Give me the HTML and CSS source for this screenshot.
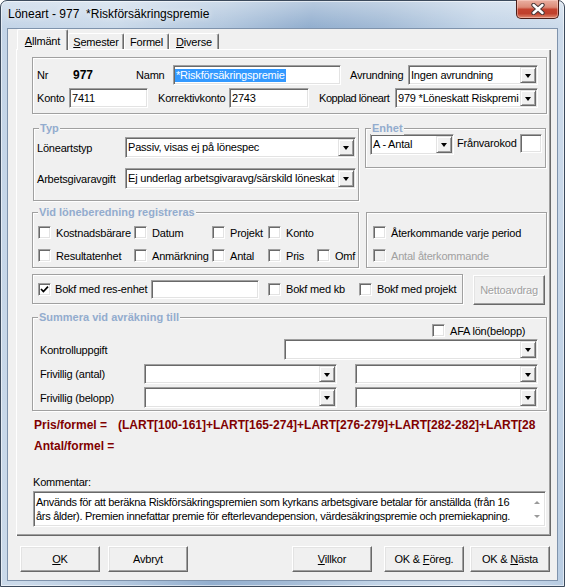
FILE: index.html
```html
<!DOCTYPE html>
<html lang="sv">
<head>
<meta charset="utf-8">
<title>Löneart - 977 *Riskförsäkringspremie</title>
<link rel="stylesheet" href="styles.css">
</head>
<body>
<div class="window">
  <div class="titlebar">
    <div class="title">Löneart - 977&nbsp; *Riskförsäkringspremie</div>
    <div class="close">
      <svg width="14" height="12" viewBox="0 0 14 12">
        <path d="M2.5 2 L11.5 10 M11.5 2 L2.5 10" stroke="#4a3a3a" stroke-width="4.4" stroke-linecap="round" fill="none"/>
        <path d="M2.5 2 L11.5 10 M11.5 2 L2.5 10" stroke="#ffffff" stroke-width="2.4" stroke-linecap="round" fill="none"/>
      </svg>
    </div>
  </div>
  <div class="client">
    <div class="tabs">
      <div class="tab active t-allm"><span><u>A</u>llmänt</span></div>
      <div class="tab t-sem"><span><u>S</u>emester</span></div>
      <div class="tab t-form"><span>Formel</span></div>
      <div class="tab t-div"><span><u>D</u>iverse</span></div>
    </div>
    <div class="page">
      <div class="group g-head">
        <div class="row">
          <span class="lbl l-nr">Nr</span>
          <span class="lbl l-num">977</span>
          <span class="lbl l-namn">Namn</span>
          <div class="edit e-namn"><span class="sel">*Riskförsäkringspremie</span></div>
          <span class="lbl l-avr">Avrundning</span>
          <div class="combo c-avr"><span class="val">Ingen avrundning</span><span class="drop"></span></div>
        </div>
        <div class="row row-2">
          <span class="lbl l-konto">Konto</span>
          <div class="edit e-konto">7411</div>
          <span class="lbl l-korr">Korrektivkonto</span>
          <div class="edit e-korr">2743</div>
          <span class="lbl l-kopp">Kopplad löneart</span>
          <div class="combo c-kopp"><span class="val">979 *Löneskatt Riskpremie</span><span class="drop"></span></div>
        </div>
      </div>

      <div class="line line-b">
        <div class="group g-typ">
          <span class="legend">Typ</span>
          <div class="row row-typ">
            <span class="lbl l-typ">Löneartstyp</span>
            <div class="combo c-typ"><span class="val">Passiv, visas ej på lönespec</span><span class="drop"></span></div>
          </div>
          <div class="row row-typ row-typ2">
            <span class="lbl l-typ">Arbetsgivaravgift</span>
            <div class="combo c-typ"><span class="val">Ej underlag arbetsgivaravg/särskild löneskat</span><span class="drop"></span></div>
          </div>
        </div>
        <div class="group g-enh">
          <span class="legend">Enhet</span>
          <div class="row row-enh">
            <div class="combo c-enh"><span class="val">A - Antal</span><span class="drop"></span></div>
            <span class="lbl l-fr">Frånvarokod</span>
            <div class="edit e-fr"></div>
          </div>
        </div>
      </div>

      <div class="line line-c">
        <div class="group g-vid">
          <span class="legend">Vid löneberedning registreras</span>
          <div class="row chkrow">
            <label class="chk k1"><span class="cb"></span><span>Kostnadsbärare</span></label>
            <label class="chk k2"><span class="cb"></span><span>Datum</span></label>
            <label class="chk k3"><span class="cb"></span><span>Projekt</span></label>
            <label class="chk k4"><span class="cb"></span><span>Konto</span></label>
          </div>
          <div class="row chkrow chkrow2">
            <label class="chk k1"><span class="cb"></span><span>Resultatenhet</span></label>
            <label class="chk k2"><span class="cb"></span><span>Anmärkning</span></label>
            <label class="chk k3"><span class="cb"></span><span>Antal</span></label>
            <label class="chk k4"><span class="cb"></span><span>Pris</span></label>
            <label class="chk"><span class="cb"></span><span>Omf</span></label>
          </div>
        </div>
        <div class="group g-ater">
          <div class="row chkrow">
            <label class="chk"><span class="cb"></span><span>Återkommande varje period</span></label>
          </div>
          <div class="row chkrow chkrow2">
            <label class="chk disabled"><span class="cb"></span><span>Antal återkommande</span></label>
          </div>
        </div>
      </div>

      <div class="line line-d">
        <div class="group g-bokf">
          <label class="chk"><span class="cb checked"><svg width="9" height="9" viewBox="0 0 9 9"><path d="M1 4 L3.4 6.6 L8 1.6" stroke="#000" stroke-width="1.7" fill="none"/></svg></span><span class="l-res">Bokf med res-enhet</span></label>
          <div class="edit e-res"></div>
          <label class="chk k-kb"><span class="cb"></span><span class="l-kb">Bokf med kb</span></label>
          <label class="chk"><span class="cb"></span><span>Bokf med projekt</span></label>
        </div>
        <div class="btn b-netto disabled"><span>Nettoavdrag</span></div>
      </div>

      <div class="group g-sum">
        <span class="legend">Summera vid avräkning till</span>
        <div class="row afa-row">
          <label class="chk"><span class="cb"></span><span>AFA lön(belopp)</span></label>
        </div>
        <div class="row sum-kontr">
          <span class="lbl l-kontr">Kontrolluppgift</span>
          <div class="combo c-kontr"><span class="val"></span><span class="drop"></span></div>
        </div>
        <div class="row sum-ant">
          <span class="lbl l-friv">Frivillig (antal)</span>
          <div class="combo c-f1"><span class="val"></span><span class="drop"></span></div>
          <div class="combo c-f2"><span class="val"></span><span class="drop"></span></div>
        </div>
        <div class="row sum-bel">
          <span class="lbl l-friv">Frivillig (belopp)</span>
          <div class="combo c-f1"><span class="val"></span><span class="drop"></span></div>
          <div class="combo c-f2"><span class="val"></span><span class="drop"></span></div>
        </div>
      </div>

      <div class="formula f-pris">
        <span class="f-lbl">Pris/formel =</span>
        <span class="f-val">(LART[100-161]+LART[165-274]+LART[276-279]+LART[282-282]+LART[28</span>
      </div>
      <div class="formula">
        <span class="f-lbl">Antal/formel =</span>
      </div>

      <div class="komm-lbl">Kommentar:</div>
      <div class="memo">
        <div class="memo-text">Används för att beräkna Riskförsäkringspremien som kyrkans arbetsgivare betalar för anställda (från 16<br>års ålder). Premien innefattar premie för efterlevandepension, värdesäkringspremie och premiekapning.</div>
        <div class="memo-scroll"><span class="arr-up"></span><span class="arr-down"></span></div>
      </div>
    </div>

    <div class="buttons">
      <div class="btn b-ok"><span><u>O</u>K</span></div>
      <div class="btn b-avb"><span>Avbryt</span></div>
      <div class="btn b-vil"><span><u>V</u>illkor</span></div>
      <div class="btn b-for"><span>OK &amp; <u>F</u>öreg.</span></div>
      <div class="btn b-nas"><span>OK &amp; <u>N</u>ästa</span></div>
    </div>
  </div>
</div>
</body>
</html>
```

FILE: styles.css
```css
* { box-sizing: border-box; }
html, body { margin: 0; padding: 0; }
body {
  width: 565px;
  height: 587px;
  overflow: hidden;
  background: #ffffff;
  font-family: "Liberation Sans", Arial, sans-serif;
  font-size: 11px;
  line-height: 14px;
  letter-spacing: -0.2px;
  color: #000;
}

/* ---------- window frame ---------- */
.window {
  width: 565px;
  height: 587px;
  border: 1px solid #3c4a5c;
  border-radius: 7px 7px 0 0;
  background:
    linear-gradient(to bottom, rgba(255,255,255,0.35), rgba(255,255,255,0) 26px),
    linear-gradient(100deg, #c3d4e7 0%, #cbdaea 18%, #b2c7de 34%, #93afcf 47%, #a3bbd6 58%, #c2d4e7 72%, #cddbeb 86%, #b8cce2 100%);
  box-shadow: inset 0 0 0 1px rgba(255,255,255,0.55);
  display: flex;
  flex-direction: column;
}
.titlebar {
  height: 28px;
  display: flex;
  align-items: flex-start;
}
.title {
  margin: 5px 0 0 7px;
  font-family: "Liberation Sans", Arial, sans-serif;
  font-size: 12px;
  line-height: 16px;
  letter-spacing: 0;
  color: #000;
  text-shadow: 0 0 6px rgba(255,255,255,0.9);
}
.close {
  margin: -1px 5px 0 auto;
  width: 43px;
  height: 19px;
  border: 1px solid #4b1d17;
  border-top: none;
  border-radius: 0 0 5px 5px;
  background: linear-gradient(to bottom, #eab0a2 0%, #dc8b78 40%, #c4432f 52%, #c0402c 75%, #e08a70 100%);
  box-shadow: inset 0 0 0 1px rgba(255,220,210,0.45);
  display: flex;
  align-items: center;
  justify-content: center;
}
.close svg { display: block; }

.client {
  margin-left: 7px;
  width: 549px;
  height: 551px;
  background: #f0f0f0;
  box-shadow: 0 0 0 1px #7f93ac;
  padding-left: 8px;
}

/* ---------- tabs ---------- */
.tabs {
  display: flex;
  align-items: flex-end;
  height: 20px;
  padding-left: 1px;
}
.tab {
  position: relative;
  z-index: 2;
  height: 16px;
  background: #f0f0f0;
  border: 1px solid #ffffff;
  border-bottom: none;
  border-right-color: #696969;
  box-shadow: inset -1px 0 0 #a0a0a0;
  border-radius: 2px 2px 0 0;
  text-align: center;
  padding-top: 1px;
  white-space: nowrap;
}
.tab.active {
  height: 21px;
  margin-bottom: -1px;
  padding-top: 4px;
}
.t-allm { width: 51px; }
.t-sem { width: 56px; }
.t-form { width: 45px; }
.t-div { width: 50px; }

.page {
  position: relative;
  z-index: 1;
  width: 535px;
  height: 487px;
  background: #f0f0f0;
  box-shadow: inset 1px 1px 0 #ffffff, inset -1px -1px 0 #696969, inset -2px -2px 0 #a0a0a0;
  padding: 8px 0 0 16px;
}

/* ---------- generic controls ---------- */
.row { display: flex; align-items: center; }
.line { display: flex; align-items: flex-start; }
.lbl { white-space: nowrap; flex: none; }

.group {
  position: relative;
  flex: none;
  border: 1px solid #a0a0a0;
  box-shadow: inset 1px 1px 0 #ffffff, 1px 1px 0 #ffffff;
}
.legend {
  position: absolute;
  top: -8px;
  left: 5px;
  padding: 0 1px;
  background: #f0f0f0;
  color: #93acce;
  font-weight: bold;
  letter-spacing: 0;
  white-space: nowrap;
}

.edit {
  flex: none;
  height: 20px;
  background: #ffffff;
  border: 1px solid;
  border-color: #a0a0a0 #ffffff #ffffff #a0a0a0;
  box-shadow: inset 1px 1px 0 #696969, inset -1px -1px 0 #e3e3e3;
  padding: 2px 0 0 2px;
  white-space: nowrap;
  overflow: hidden;
}
.sel {
  background: #3399ff;
  color: #ffffff;
  padding: 0 1px 1px 1px;
}

.combo {
  flex: none;
  display: flex;
  height: 21px;
  background: #ffffff;
  border: 1px solid;
  border-color: #a0a0a0 #ffffff #ffffff #a0a0a0;
  box-shadow: inset 1px 1px 0 #696969, inset -1px -1px 0 #e3e3e3;
}
.combo .val {
  flex: 1;
  min-width: 0;
  overflow: hidden;
  white-space: nowrap;
  padding: 2px 0 0 2px;
  line-height: 14px;
}
.drop {
  flex: none;
  width: 16px;
  margin: 1px;
  background: #f0f0f0;
  border: 1px solid;
  border-color: #e3e3e3 #696969 #696969 #e3e3e3;
  box-shadow: inset 1px 1px 0 #ffffff, inset -1px -1px 0 #a0a0a0;
  display: flex;
  align-items: center;
  justify-content: center;
}
.drop::after {
  content: "";
  width: 0;
  height: 0;
  margin-top: 1px;
  border-left: 3.5px solid transparent;
  border-right: 3.5px solid transparent;
  border-top: 4px solid #000000;
}

.chk {
  display: flex;
  align-items: center;
  white-space: nowrap;
  flex: none;
}
.cb {
  flex: none;
  width: 13px;
  height: 13px;
  margin-right: 5px;
  background: #ffffff;
  border: 1px solid;
  border-color: #a0a0a0 #ffffff #ffffff #a0a0a0;
  box-shadow: inset 1px 1px 0 #696969, inset -1px -1px 0 #e3e3e3;
  display: flex;
  align-items: center;
  justify-content: center;
}
.cb svg { display: block; }
.chk.disabled { color: #a0a0a0; }
.chk.disabled .cb { background: #f0f0f0; }

.btn {
  flex: none;
  width: 80px;
  height: 26px;
  background: #f0f0f0;
  border: 1px solid;
  border-color: #ffffff #696969 #696969 #ffffff;
  box-shadow: inset -1px -1px 0 #a0a0a0, inset 1px 1px 0 #e3e3e3;
  display: flex;
  align-items: center;
  justify-content: center;
  white-space: nowrap;
}
.btn.disabled {
  color: #a0a0a0;
  text-shadow: 1px 1px 0 #ffffff;
}

/* ---------- header group ---------- */
.g-head {
  width: 515px;
  height: 57px;
  padding: 7px 0 0 4px;
}
.g-head .row { height: 20px; }
.g-head .row-2 { margin-top: 3px; }
.l-nr { width: 36px; }
.l-num { width: 63px; font-weight: bold; font-size: 12px; letter-spacing: 0; }
.l-namn { width: 37px; }
.e-namn { width: 168px; padding-left: 1px; }
.l-avr { width: 58px; margin-left: 9px; }
.c-avr { width: 130px; height: 20px; }
.l-konto { width: 32px; }
.e-konto { width: 79px; }
.l-korr { width: 71px; margin-left: 10px; }
.e-korr { width: 80px; }
.l-kopp { width: 76px; margin-left: 10px; letter-spacing: -0.45px; }
.c-kopp { width: 143px; height: 20px; }

/* ---------- typ / enhet ---------- */
.line-b { margin-top: 14px; }
.g-typ {
  margin-left: 1px;
  width: 326px;
  height: 73px;
  padding: 8px 0 0 3px;
}
.row-typ { height: 21px; }
.row-typ2 { margin-top: 10px; }
.l-typ { width: 88px; }
.c-typ { width: 231px; }
.g-enh {
  margin-left: 6px;
  width: 181px;
  height: 40px;
  padding: 5px 0 0 4px;
}
.row-enh { align-items: flex-start; }
.c-enh { width: 84px; }
.l-fr { width: 63px; margin-left: 3px; padding-top: 2px; }
.e-fr { width: 22px; height: 19px; }

/* ---------- checkbox groups ---------- */
.line-c { margin-top: 11px; }
.g-vid {
  width: 327px;
  height: 56px;
  padding: 11px 0 0 5px;
}
.chkrow { height: 17px; }
.chkrow2 { margin-top: 6px; }
.k1 { width: 96px; }
.k2 { width: 78px; }
.k3 { width: 56px; }
.k4 { width: 49px; }
.g-ater {
  margin-left: 7px;
  width: 181px;
  height: 56px;
  padding: 11px 0 0 6px;
}

/* ---------- bokf ---------- */
.line-d { margin-top: 6px; }
.g-bokf {
  width: 431px;
  height: 30px;
  padding-left: 5px;
  display: flex;
  align-items: center;
}
.g-bokf .cb.checked { margin-right: 4px; }
.l-res { width: 96px; }
.e-res { width: 108px; height: 19px; }
.k-kb { margin-left: 9px; }
.l-kb { width: 73px; }
.b-netto {
  margin: 1px 0 0 10px;
  width: 72px;
  height: 30px;
}

/* ---------- summera ---------- */
.g-sum {
  margin-top: 12px;
  width: 515px;
  height: 94px;
  padding: 4px 0 0 7px;
}
.afa-row { height: 17px; padding-left: 392px; }
.sum-kontr { height: 21px; }
.l-kontr { width: 244px; }
.c-kontr { width: 254px; }
.sum-ant { height: 20px; margin-top: 4px; }
.sum-ant .combo { height: 20px; }
.sum-bel { height: 21px; margin-top: 3px; }
.l-friv { width: 104px; }
.c-f1 { width: 193px; }
.c-f2 { width: 183px; margin-left: 18px; }

/* ---------- formulas ---------- */
.formula {
  display: flex;
  align-items: center;
  height: 21px;
  margin-left: 2px;
  color: #800000;
  font-weight: bold;
  font-size: 12px;
  letter-spacing: 0;
  white-space: nowrap;
}
.f-pris { margin-top: 3px; }
.f-lbl { width: 84px; flex: none; }
.f-val { width: 426px; overflow: hidden; flex: none; }

/* ---------- kommentar ---------- */
.komm-lbl {
  margin: 19px 0 0 1px;
  height: 14px;
}
.memo {
  margin: 2px 0 0 1px;
  width: 513px;
  height: 36px;
  display: flex;
  background: #ffffff;
  border: 1px solid;
  border-color: #a0a0a0 #ffffff #ffffff #a0a0a0;
  box-shadow: inset 1px 1px 0 #696969, inset -1px -1px 0 #e3e3e3;
}
.memo-text {
  flex: 1;
  padding: 3px 0 0 2px;
  white-space: nowrap;
  overflow: hidden;
  letter-spacing: -0.3px;
}
.memo-scroll {
  flex: none;
  width: 17px;
  display: flex;
  flex-direction: column;
  align-items: center;
  justify-content: space-between;
  padding: 9px 0 8px 0;
}
.arr-up {
  width: 0; height: 0;
  border-left: 3px solid transparent;
  border-right: 3px solid transparent;
  border-bottom: 3px solid #9a9a9a;
}
.arr-down {
  width: 0; height: 0;
  border-left: 3px solid transparent;
  border-right: 3px solid transparent;
  border-top: 3px solid #9a9a9a;
}

/* ---------- buttons ---------- */
.buttons {
  display: flex;
  margin-top: 10px;
}
.b-ok { margin-left: 4px; }
.b-avb { margin-left: 8px; }
.b-vil { margin-left: 104px; }
.b-for { margin-left: 12px; }
.b-nas { margin-left: 6px; }
```
